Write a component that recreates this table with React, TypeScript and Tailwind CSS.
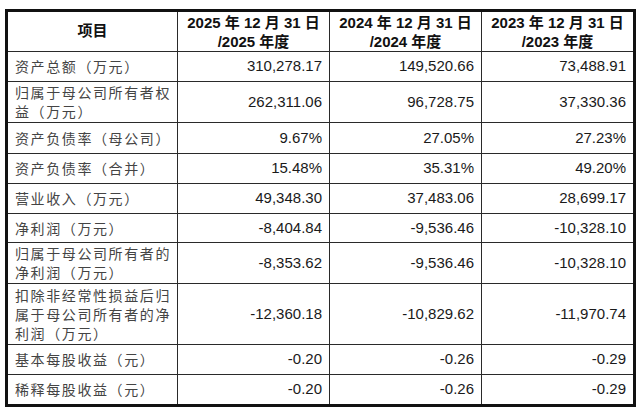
import React from "react";

type Row = {
  label: string[];
  values: string[];
  height: string;
};

const rows: Row[] = [
  { label: ["资产总额（万元）"], values: ["310,278.17", "149,520.66", "73,488.91"], height: "h-[30px]" },
  { label: ["归属于母公司所有者权", "益（万元）"], values: ["262,311.06", "96,728.75", "37,330.36"], height: "h-[41px]" },
  { label: ["资产负债率（母公司）"], values: ["9.67%", "27.05%", "27.23%"], height: "h-[31px]" },
  { label: ["资产负债率（合并）"], values: ["15.48%", "35.31%", "49.20%"], height: "h-[30px]" },
  { label: ["营业收入（万元）"], values: ["49,348.30", "37,483.06", "28,699.17"], height: "h-[30px]" },
  { label: ["净利润（万元）"], values: ["-8,404.84", "-9,536.46", "-10,328.10"], height: "h-[29px]" },
  { label: ["归属于母公司所有者的", "净利润（万元）"], values: ["-8,353.62", "-9,536.46", "-10,328.10"], height: "h-[41px]" },
  {
    label: ["扣除非经常性损益后归", "属于母公司所有者的净", "利润（万元）"],
    values: ["-12,360.18", "-10,829.62", "-11,970.74"],
    height: "h-[61px]",
  },
  { label: ["基本每股收益（元）"], values: ["-0.20", "-0.26", "-0.29"], height: "h-[30px]" },
  { label: ["稀释每股收益（元）"], values: ["-0.20", "-0.26", "-0.29"], height: "h-[29px]" },
];

const years = ["2025", "2024", "2023"];

const cjk = "font-['Liberation_Sans','Noto_Sans_CJK_SC',sans-serif]";

export default function App() {
  return (
    <div className="w-[640px] h-[410px] bg-white pt-[9px] pl-[5px]">
      <div className={`w-[631px] border-[3px] border-[#111] ${cjk}`}>
        {/* header */}
        <div className="grid grid-cols-[170px_152px_152px_151px] h-[40px] border-b border-[#2a2a2a]">
          <div className="flex items-center justify-center border-r border-[#2a2a2a] text-[15px] font-bold text-[#111]">
            项目
          </div>
          {years.map((y, i) => (
            <div
              key={y}
              className={`flex flex-col items-center justify-center text-[15px] leading-[19px] font-bold text-[#111] ${
                i < 2 ? "border-r border-[#2a2a2a]" : ""
              }`}
            >
              <span className="whitespace-pre">{`${y} 年 12 月 31 日`}</span>
              <span className="whitespace-pre">{`/${y} 年度`}</span>
            </div>
          ))}
        </div>

        {rows.map((row, ri) => (
          <div
            key={ri}
            className={`grid grid-cols-[170px_152px_152px_151px] ${row.height} ${
              ri < rows.length - 1 ? "border-b border-[#2a2a2a]" : ""
            }`}
          >
            <div className="flex flex-col justify-center pl-[7px] border-r border-[#2a2a2a] font-['Noto_Sans_CJK_SC',sans-serif] text-[14px] leading-[19px] tracking-[1.6px] text-[#444]">
              {row.label.map((line) => (
                <span key={line} className="whitespace-nowrap">
                  {line}
                </span>
              ))}
            </div>
            {row.values.map((v, vi) => (
              <div
                key={vi}
                className={`flex items-center justify-end pr-[7px] font-['Liberation_Sans',sans-serif] text-[15px] text-[#1a1a1a] ${
                  vi < 2 ? "border-r border-[#2a2a2a]" : ""
                }`}
              >
                {v}
              </div>
            ))}
          </div>
        ))}
      </div>
    </div>
  );
}
